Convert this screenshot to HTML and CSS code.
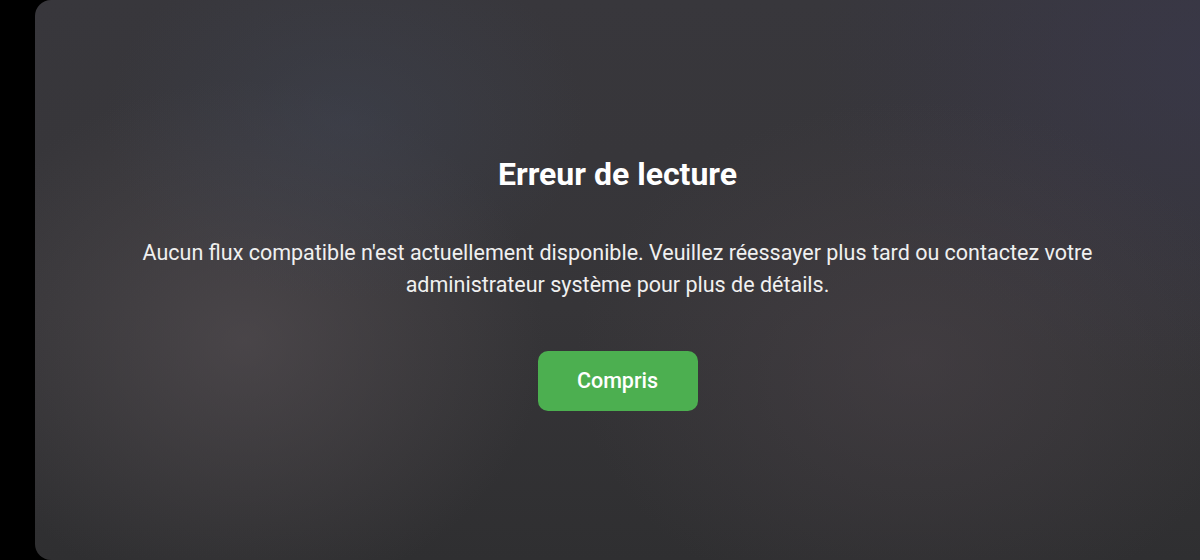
FILE: index.html
```html
<!DOCTYPE html>
<html lang="fr">

<head>
  <meta name="viewport" content="width=device-width, initial-scale=1.0">
  <meta charset="utf-8">
  <title>Erreur de lecture</title>
  <link rel="stylesheet" href="styles.css">
</head>

<body>
  <div class="dialog">
    <h1 class="title">Erreur de lecture</h1>
    <p class="text">Aucun flux compatible n'est actuellement disponible. Veuillez réessayer plus tard ou contactez votre administrateur système pour plus de détails.</p>
    <button class="btn">Compris</button>
  </div>
</body>

</html>
```

FILE: styles.css
```css
html, body, h1, p {
  margin: 0;
  padding: 0;
}

html, body {
  height: 100%;
}

body {
  background: #000;
  font-family: Roboto, "Liberation Sans", sans-serif;
  display: flex;
  padding-left: 35px;
  overflow: hidden;
}

.dialog {
  flex: 1;
  padding-top: 5px;
  border-radius: 16px 0 0 16px;
  background:
    radial-gradient(ellipse 240px 180px at 310px 120px, rgba(64, 70, 86, 0.45), transparent),
    radial-gradient(ellipse 300px 260px at 210px 340px, rgba(84, 78, 82, 0.65), transparent),
    radial-gradient(ellipse 340px 260px at 880px 360px, rgba(76, 68, 74, 0.5), transparent),
    radial-gradient(ellipse 400px 320px at 1180px 60px, rgba(58, 56, 80, 0.55), transparent),
    linear-gradient(180deg, #38373c 0%, #363538 55%, #2f2f31 100%);
  display: flex;
  flex-direction: column;
  align-items: center;
  justify-content: center;
  text-align: center;
  color: #fff;
}

.title {
  font-size: 32px;
  line-height: 38px;
  font-weight: 700;
  margin-bottom: 44px;
}

.text {
  font-size: 21.5px;
  line-height: 32px;
  color: #f0f0f0;
  max-width: 1000px;
  margin-bottom: 50px;
}

.btn {
  width: 160px;
  height: 60px;
  border: 0;
  border-radius: 10px;
  background: #4caf50;
  color: #fff;
  font-family: inherit;
  font-size: 21.5px;
  font-weight: 500;
  cursor: pointer;
}
```
